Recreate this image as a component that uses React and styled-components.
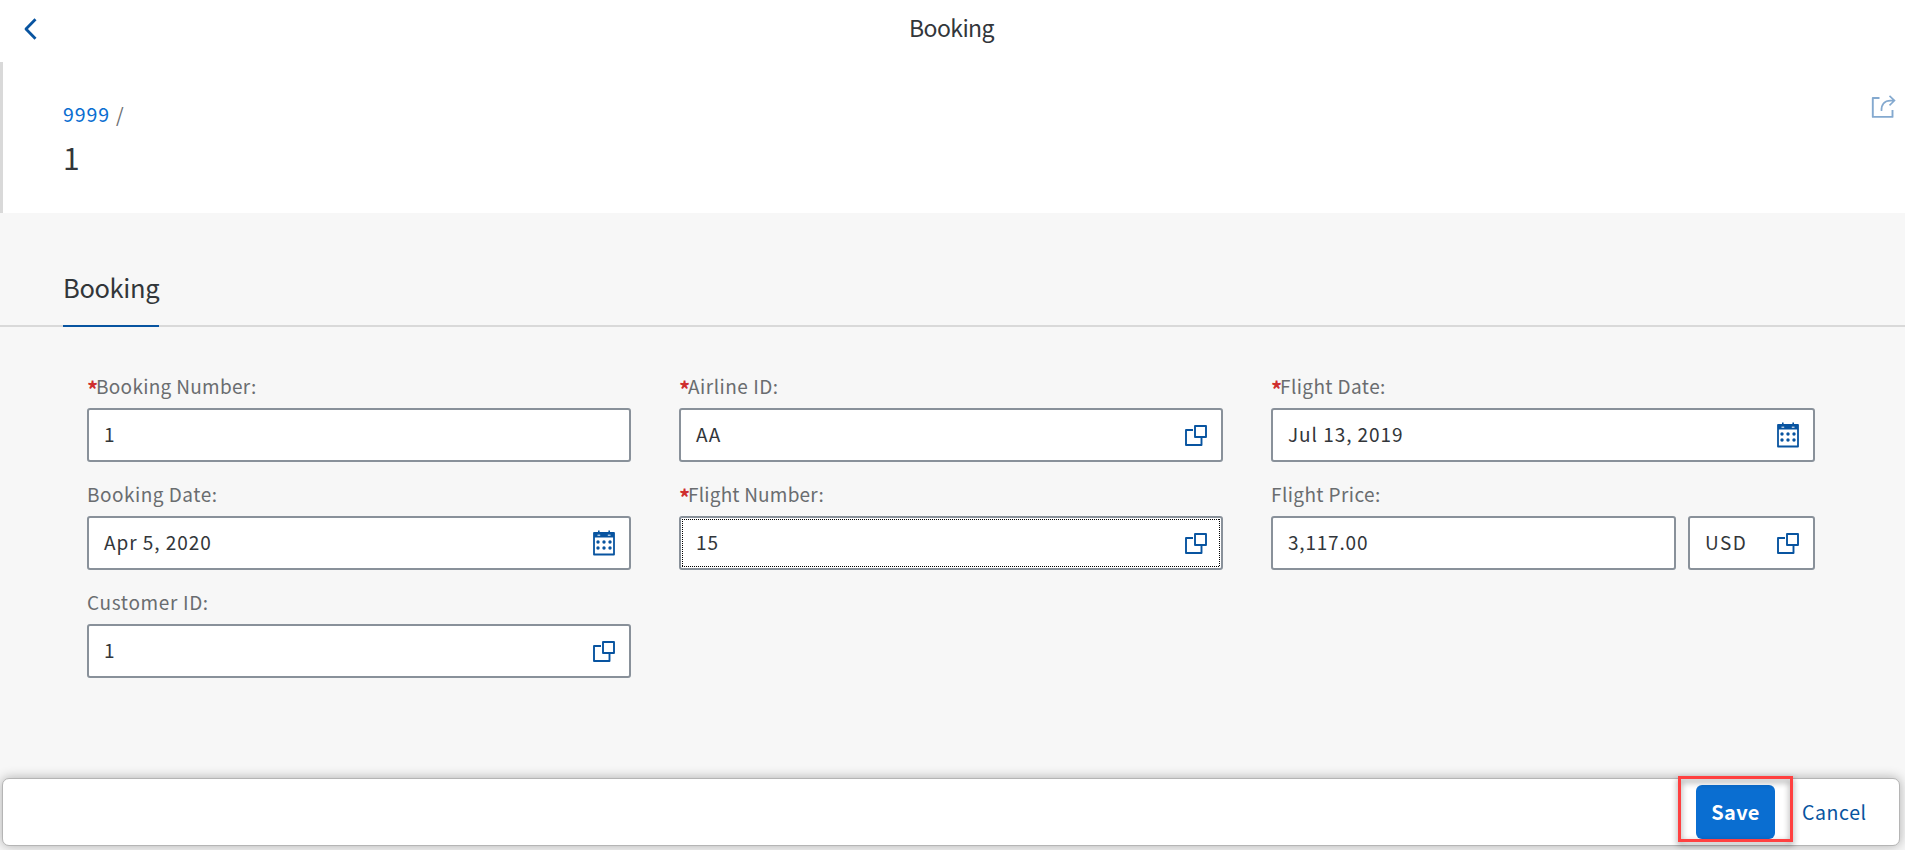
import React from 'react';
import styled, { createGlobalStyle } from 'styled-components';

const Global = createGlobalStyle`
  *, *::before, *::after { box-sizing: border-box; }
  html, body { margin: 0; padding: 0; background: #f7f7f7; overflow: hidden; }
  body { font-family: "Noto Sans CJK JP", "Open Sans", sans-serif; color: #32363a; }
`;

const Page = styled.div`
  width: 100%;
  height: 850px;
  display: flex;
  flex-direction: column;
  background: #f7f7f7;
`;

const ShellBar = styled.header`
  display: grid;
  grid-template-columns: 60px 1fr 62px;
  align-items: center;
  height: 62px;
  flex: none;
  background: #fff;
`;

const BackButton = styled.button`
  display: flex;
  padding: 0 0 4px 24px;
  border: 0;
  background: none;
`;

const ShellTitle = styled.h1`
  margin: 0;
  padding-bottom: 9px;
  text-align: center;
  font-size: 23px;
  line-height: 40px;
  font-weight: 400;
  letter-spacing: -0.6px;
`;

const ObjectHeader = styled.section`
  display: flex;
  justify-content: space-between;
  height: 151px;
  flex: none;
  padding: 33px 9px 0 60px;
  border-left: 3px solid #d9d9d9;
  background: #fff;
`;

const HeaderText = styled.div`
  margin-top: -2px;
`;

const Crumbs = styled.nav`
  display: flex;
  gap: 6px;
  height: 40px;
  align-items: center;
  font-size: 19.5px;
  color: #6a6d70;
`;

const CrumbLink = styled.a`
  color: #0a6ed1;
  letter-spacing: 0.9px;
`;

const ObjectTitle = styled.h2`
  margin: 0;
  font-size: 30px;
  line-height: 48px;
  font-weight: 400;
`;

const TabBar = styled.div`
  display: flex;
  height: 114px;
  flex: none;
  padding: 0 63px;
  align-items: flex-end;
  box-shadow: inset 0 -2px #d9d9d9;
`;

const Tab = styled.div`
  width: 96px;
  height: 60px;
  border-bottom: 2px solid #0854a0;
  font-size: 25.5px;
  line-height: 39px;
  letter-spacing: -0.35px;
  white-space: nowrap;
`;

const Form = styled.main`
  display: grid;
  grid-template-columns: repeat(3, 544px);
  grid-auto-rows: 108px;
  column-gap: 48px;
  padding: 41px 0 0 87px;
  flex: 1;
`;

const Field = styled.div`
  display: flex;
  flex-direction: column;
`;

const Label = styled.label`
  display: flex;
  height: 40px;
  font-size: 19px;
  line-height: 36px;
  letter-spacing: ${(p) => p.$tracking ?? 0.4}px;
  color: #6a6d70;
  white-space: nowrap;
`;

const Required = styled.span`
  width: 9px;
  font-weight: 700;
  font-size: 22px;
  line-height: 41px;
  letter-spacing: 0;
  color: #cf2e2e;
`;

const Controls = styled.div`
  display: flex;
  gap: 12px;
`;

const InputBox = styled.div`
  display: flex;
  justify-content: space-between;
  align-items: center;
  position: relative;
  height: 54px;
  width: ${(p) => p.$width || 544}px;
  padding: 0 14px 0 15px;
  border: 2px solid #89919a;
  border-radius: 3px;
  background: #fff;
`;

const FocusRing = styled.span`
  position: absolute;
  inset: 1px;
  background:
    repeating-linear-gradient(90deg, #000 0 1px, transparent 1px 2px) top / 100% 1px no-repeat,
    repeating-linear-gradient(90deg, #000 0 1px, transparent 1px 2px) bottom / 100% 1px no-repeat,
    repeating-linear-gradient(#000 0 1px, transparent 1px 2px) left / 1px 100% no-repeat,
    repeating-linear-gradient(#000 0 1px, transparent 1px 2px) right / 1px 100% no-repeat;
`;

const Value = styled.span`
  padding-bottom: 2px;
  font-size: 19px;
  line-height: 30px;
  letter-spacing: ${(p) => p.$tracking ?? 0.95}px;
  white-space: nowrap;
`;

const Footer = styled.footer`
  display: flex;
  justify-content: flex-end;
  align-items: center;
  flex: none;
  height: 68px;
  margin: 0 5px 4px 2px;
  padding-right: 33px;
  gap: 27px;
  border: 1px solid #b5b5b5;
  border-radius: 7px;
  background: #fff;
  box-shadow: 0 0 12px rgba(0, 0, 0, 0.3);
`;

const SaveWrap = styled.div`
  position: relative;
`;

const Save = styled.button`
  display: block;
  width: 79px;
  height: 54px;
  padding: 0 0 1px;
  border: 0;
  border-radius: 6px;
  background: #0a6ed1;
  color: #fff;
  font: 700 20px "Noto Sans CJK JP", sans-serif;
  letter-spacing: 0.3px;
`;

const Highlight = styled.span`
  position: absolute;
  left: -18px;
  top: -9px;
  width: 115px;
  height: 66px;
  border: 3px solid #ff4040;
  filter: drop-shadow(0 3px 3px rgba(0, 0, 0, 0.45));
`;

const Cancel = styled.button`
  width: 64px;
  padding: 0 0 1px;
  border: 0;
  background: none;
  color: #0854a0;
  font: 400 19.5px "Noto Sans CJK JP", sans-serif;
  letter-spacing: 0.6px;
`;

const Glyph = styled.svg`
  display: block;
  flex: none;
  fill: none;
  stroke: ${(p) => p.$color || '#0854a0'};
`;

const BackIcon = () => (
  <Glyph width="13" height="22" viewBox="0 0 13 22" strokeWidth="2.8">
    <path d="M11.5 1.2 2 11l9.5 9.8" strokeLinejoin="round" />
  </Glyph>
);

const ShareIcon = () => (
  <Glyph width="25" height="24" viewBox="0 0 25 24" $color="#84a9cf">
    <path d="M8.500 3H1.800v18.900H21.500V15" strokeWidth="1.900" strokeLinejoin="round" />
    <path d="M10.500 16C10 9.500 13.500 5.600 19.500 5.600H23.500M18.500 .8l5 4.800-5 4.800" strokeWidth="1.600" />
  </Glyph>
);

const ValueHelpIcon = () => (
  <Glyph width="22" height="22" viewBox="0 0 22 22">
    <path d="M8 6H1V21H16.500V13.500" strokeWidth="1.900" strokeLinejoin="round" />
    <rect x="10" y="2" width="11" height="11" strokeWidth="1.900" strokeLinejoin="round" />
  </Glyph>
);

const CalendarIcon = () => (
  <Glyph width="22" height="26" viewBox="0 0 22 26">
    <rect x="1" y="3" width="20" height="21.500" strokeWidth="1.800" strokeLinejoin="round" />
    <path d="M1 5.200h20" strokeWidth="4.600" />
    <path d="M5.800 .5v2.500M16.200 .5v2.500" strokeWidth="1.600" />
    <path d="M4.500 5.200H7.200M14.800 5.200H17.500" stroke="#fff" strokeWidth="1" />
    {[5, 11, 17].map((x) =>
      [12, 18].map((y) => <circle key={`${x}-${y}`} cx={x} cy={y} r="1.700" fill="#0854a0" stroke="none" />)
    )}
  </Glyph>
);

const icons = { help: ValueHelpIcon, calendar: CalendarIcon };

const Input = ({ value, icon, width, focused, tracking }) => {
  const Icon = icons[icon];
  return (
    <InputBox $width={width}>
      {focused && <FocusRing />}
      <Value $tracking={tracking}>{value}</Value>
      {Icon && <Icon />}
    </InputBox>
  );
};

const fields = [
  { label: 'Booking Number:', tracking: 0.3, required: true, inputs: [{ value: '1' }] },
  { label: 'Airline ID:', tracking: 0.5, required: true, inputs: [{ value: 'AA', icon: 'help', tracking: 1.4 }] },
  { label: 'Flight Date:', required: true, inputs: [{ value: 'Jul 13, 2019', icon: 'calendar' }] },
  { label: 'Booking Date:', tracking: 0.5, inputs: [{ value: 'Apr 5, 2020', icon: 'calendar' }] },
  { label: 'Flight Number:', tracking: 0.2, required: true, inputs: [{ value: '15', icon: 'help', focused: true }] },
  { label: 'Flight Price:', inputs: [{ value: '3,117.00', width: 405, tracking: 0.8 }, { value: 'USD', icon: 'help', width: 127, tracking: 1.5 }] },
  { label: 'Customer ID:', tracking: 0.65, inputs: [{ value: '1', icon: 'help' }] },
];

export default function App() {
  return (
    <Page>
      <Global />
      <ShellBar>
        <BackButton aria-label="Back"><BackIcon /></BackButton>
        <ShellTitle>Booking</ShellTitle>
      </ShellBar>
      <ObjectHeader>
        <HeaderText>
          <Crumbs><CrumbLink>9999</CrumbLink><span>/</span></Crumbs>
          <ObjectTitle>1</ObjectTitle>
        </HeaderText>
        <ShareIcon />
      </ObjectHeader>
      <TabBar><Tab>Booking</Tab></TabBar>
      <Form>
        {fields.map((f) => (
          <Field key={f.label}>
            <Label $tracking={f.tracking}>{f.required && <Required>*</Required>}{f.label}</Label>
            <Controls>{f.inputs.map((i) => <Input key={i.value} {...i} />)}</Controls>
          </Field>
        ))}
      </Form>
      <Footer>
        <SaveWrap>
          <Save>Save</Save>
          <Highlight />
        </SaveWrap>
        <Cancel>Cancel</Cancel>
      </Footer>
    </Page>
  );
}
